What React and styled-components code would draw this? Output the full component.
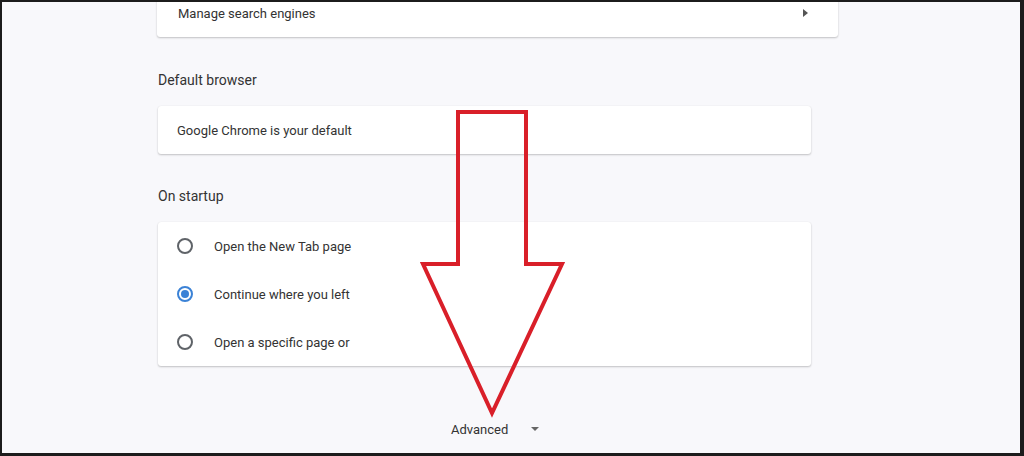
import React from 'react';
import styled, { createGlobalStyle } from 'styled-components';

const Global = createGlobalStyle`
    html, body {
        margin: 0;
        padding: 0;
        background: #1e1e1e;
    }
    * {
        box-sizing: border-box;
    }
`;

const Frame = styled.div`
    position: relative;
    width: 1024px;
    height: 456px;
    overflow: hidden;
    background: #f8f8fb;
    border-style: solid;
    border-color: #1c1c1c;
    border-width: 2px 4px 3px 2px;
    font-family: Roboto, 'Liberation Sans', Arial, sans-serif;
    color: #333;
`;

const Column = styled.div`
    display: flex;
    flex-direction: column;
    align-items: flex-start;
    padding-left: 155px;
`;

const Card = styled.div`
    width: ${p => p.width}px;
    margin-top: ${p => p.top || 0}px;
    margin-left: ${p => p.indent || 0}px;
    background: #fff;
    border-radius: 3px;
    box-shadow: 0 1px 2px rgba(0, 0, 0, 0.22), 0 0 1px rgba(0, 0, 0, 0.08);
`;

const Row = styled.div`
    display: flex;
    align-items: center;
    height: 48px;
    padding: 0 ${p => p.right || 20}px 0 ${p => p.left || 20}px;
    font-size: 13px;
`;

const Label = styled.span`
    flex: 1;
    white-space: nowrap;
`;

const Heading = styled.div`
    margin-top: ${p => p.top}px;
    margin-bottom: 16px;
    margin-left: 1px;
    height: 20px;
    line-height: 20px;
    font-size: 14px;
    color: #333;
`;

const SubArrow = styled.span`
    width: 0;
    height: 0;
    border-top: 4px solid transparent;
    border-bottom: 4px solid transparent;
    border-left: 5px solid #555;
`;

const Radio = styled.span`
    flex: none;
    width: 16px;
    height: 16px;
    margin-right: 21px;
    border-radius: 50%;
    border: 2px solid ${p => (p.checked ? '#3b82d6' : '#5f6368')};
    display: flex;
    align-items: center;
    justify-content: center;

    &::after {
        content: '';
        display: ${p => (p.checked ? 'block' : 'none')};
        width: 8px;
        height: 8px;
        border-radius: 50%;
        background: #3b82d6;
    }
`;

const Advanced = styled.div`
    width: 656px;
    margin-top: 53px;
    padding-left: 294px;
    display: flex;
    align-items: center;
    height: 20px;
    font-size: 13px;
    color: #333;
`;

const DropArrow = styled.span`
    margin-left: 23px;
    width: 0;
    height: 0;
    border-left: 4.5px solid transparent;
    border-right: 4.5px solid transparent;
    border-top: 4.5px solid #666;
`;

const Overlay = styled.svg`
    position: absolute;
    left: -2px;
    top: -2px;
    pointer-events: none;
`;

// the arrow drawn over the screenshot hides the rest of these labels
const startup = [
    { text: 'Open the New Tab page', checked: false },
    { text: 'Continue where you left', checked: true },
    { text: 'Open a specific page or', checked: false },
];

export default function App() {
    return (
        <>
            <Global />
            <Frame>
                <Column>
                    <Card width={681} top={-13}>
                        <Row left={21} right={30}>
                            <Label>Manage search engines</Label>
                            <SubArrow />
                        </Row>
                    </Card>

                    <Heading top={33}>Default browser</Heading>
                    <Card width={653} indent={1}>
                        <Row left={19}>
                            <Label>Google Chrome is your default</Label>
                        </Row>
                    </Card>

                    <Heading top={32}>On startup</Heading>
                    <Card width={653} indent={1}>
                        {startup.map(item => (
                            <Row key={item.text} left={19}>
                                <Radio checked={item.checked} />
                                <Label>{item.text}</Label>
                            </Row>
                        ))}
                    </Card>

                    <Advanced>
                        Advanced
                        <DropArrow />
                    </Advanced>
                </Column>

                <Overlay width="1024" height="456" viewBox="0 0 1024 456">
                    <polygon
                        points="458,112 526,112 526,264 562,264 492,413 423,264 458,264"
                        fill="none"
                        stroke="#d91f29"
                        strokeWidth="4"
                        strokeLinejoin="miter"
                    />
                </Overlay>
            </Frame>
        </>
    );
}
